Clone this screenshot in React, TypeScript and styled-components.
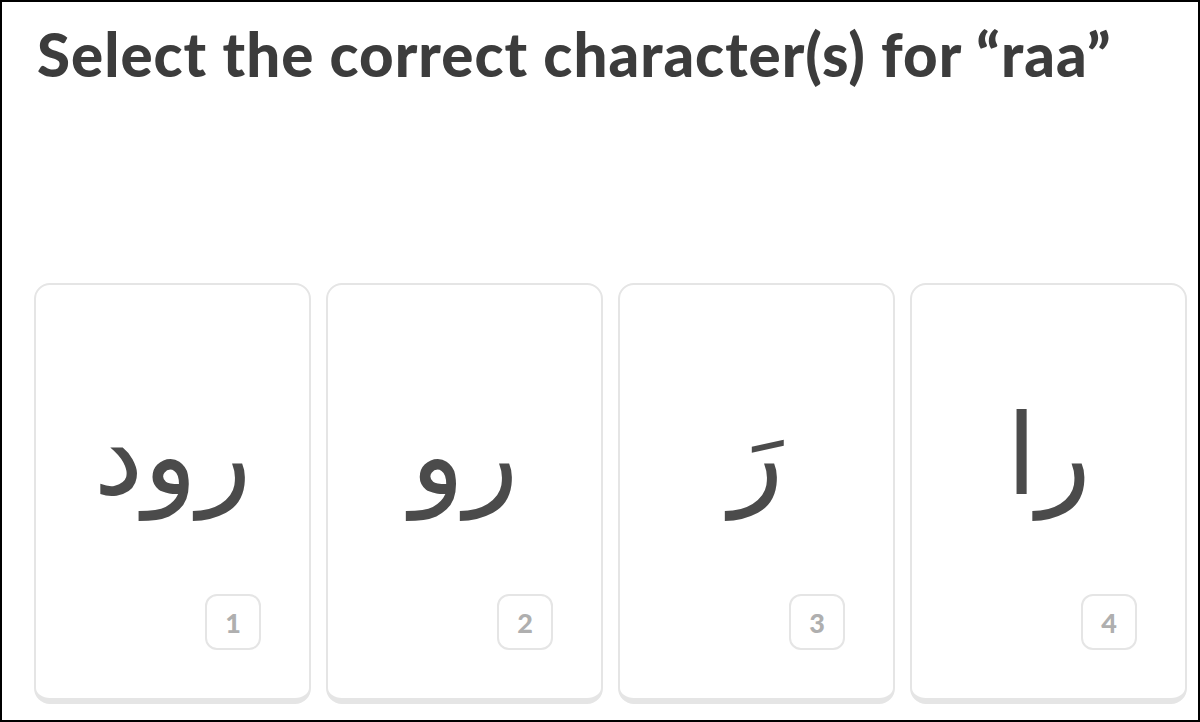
import React from "react";
import styled, { createGlobalStyle } from "styled-components";

const GlobalStyle = createGlobalStyle`
  html, body {
    margin: 0;
    padding: 0;
    background: #ffffff;
  }
  * { box-sizing: border-box; }
`;

const Frame = styled.div`
  width: 1200px;
  height: 722px;
  border: 2px solid #000000;
  background: #ffffff;
  overflow: hidden;
  display: flex;
  flex-direction: column;
`;

const Title = styled.h1`
  margin: 20px 0 0 35px;
  font-family: "Lato", "DejaVu Sans", sans-serif;
  font-weight: 900;
  font-size: 60px;
  line-height: 64px;
  letter-spacing: 1px;
  color: #3c3c3c;
  white-space: nowrap;
`;

const Choices = styled.div`
  margin: 197px 0 0 32px;
  display: grid;
  grid-template-columns: repeat(4, 277px);
  column-gap: 15px;
`;

const Card = styled.div`
  height: 421px;
  border: 2px solid #e5e5e5;
  border-bottom-width: 6px;
  border-radius: 16px;
  background: #ffffff;
  display: flex;
  flex-direction: column;
`;

const Glyph = styled.div`
  flex: 1;
  display: flex;
  align-items: center;
  justify-content: center;
  padding-top: 30px;
  font-family: "DejaVu Sans", sans-serif;
  font-size: 112px;
  line-height: 1;
  color: #4b4b4b;
  direction: rtl;
`;

const Footer = styled.div`
  display: flex;
  justify-content: flex-end;
  padding: 0 48px 48px 0;
`;

const Badge = styled.span`
  width: 56px;
  height: 56px;
  border: 2px solid #e5e5e5;
  border-radius: 12px;
  display: flex;
  align-items: center;
  justify-content: center;
  font-family: "Lato", "DejaVu Sans", sans-serif;
  font-weight: 900;
  font-size: 27px;
  line-height: 1;
  color: #afafaf;
`;

const options = ["رود", "رو", "رَ", "را"];

export default function App() {
  return (
    <>
      <GlobalStyle />
      <Frame>
        <Title>Select the correct character(s) for “raa”</Title>
        <Choices>
          {options.map((o, i) => (
            <Card key={i}>
              <Glyph lang="ar">{o}</Glyph>
              <Footer>
                <Badge>{i + 1}</Badge>
              </Footer>
            </Card>
          ))}
        </Choices>
      </Frame>
    </>
  );
}
